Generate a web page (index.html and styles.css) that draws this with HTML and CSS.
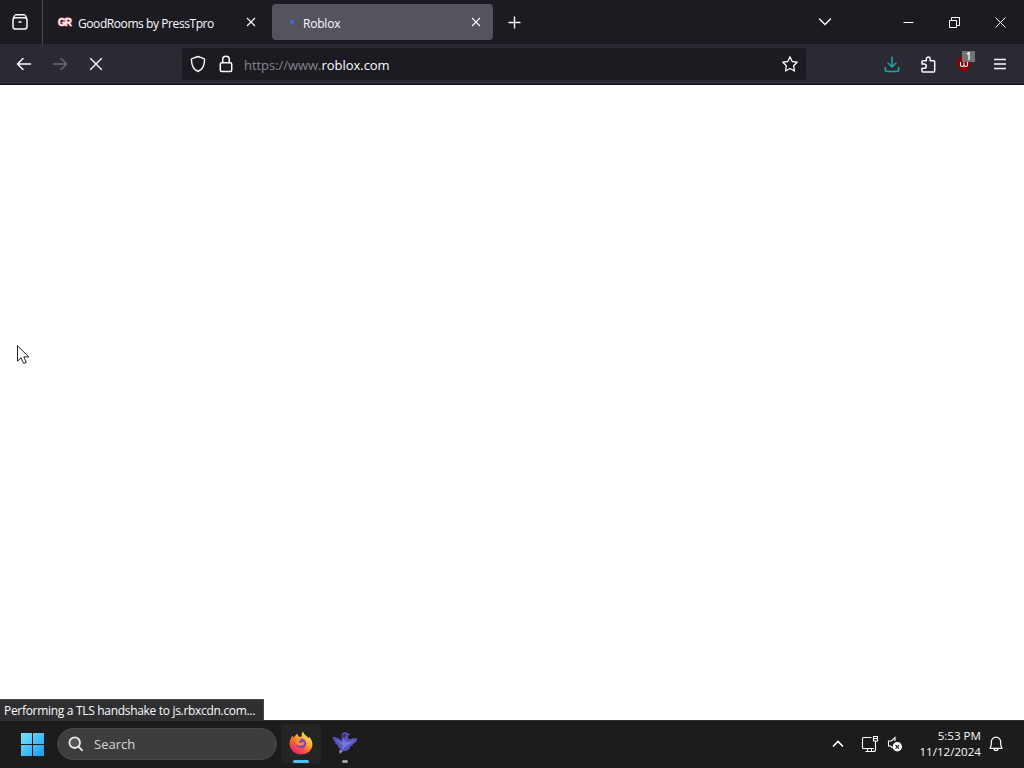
FILE: index.html
```html
<!DOCTYPE html>
<html lang="en">

<head>
    <meta charset="UTF-8">
    <title>Roblox</title>
    <link rel="stylesheet" href="styles.css">
</head>

<body>
    <!-- Tab bar -->
    <div class="tabbar">
        <div class="firefox-view">
            <svg width="18" height="18" viewBox="0 0 18 18" fill="none" stroke="#fbfbfe" stroke-width="1.5" stroke-linecap="round">
                <path d="M4.5 1.8h9" />
                <path d="M2 7.2a2.4 2.4 0 0 1 2.4-2.4h9.2A2.4 2.4 0 0 1 16 7.2v6.6a2.2 2.2 0 0 1-2.2 2.2H4.2A2.2 2.2 0 0 1 2 13.8zM2.3 5.5l1.2-2.6M15.7 5.5l-1.2-2.6M8 9h2" />
            </svg>
        </div>
        <div class="tab">
            <span class="gr-icon">GR</span>
            <span class="tab-title good">GoodRooms by PressTpro</span>
            <svg class="tab-close" width="10" height="10" viewBox="0 0 10 10" stroke="#fbfbfe" stroke-width="1.1"><path d="M1 1l8 8M9 1L1 9" /></svg>
        </div>
        <div class="tab active">
            <span class="loading"></span>
            <span class="tab-title">Roblox</span>
            <svg class="tab-close" width="10" height="10" viewBox="0 0 10 10" stroke="#fbfbfe" stroke-width="1.1"><path d="M1 1l8 8M9 1L1 9" /></svg>
        </div>
        <svg class="new-tab" width="13" height="13" viewBox="0 0 13 13" stroke="#fbfbfe" stroke-width="1.4"><path d="M6.5 0.5v12M0.5 6.5h12" /></svg>

        <div class="window-buttons">
            <svg width="14" height="10" viewBox="0 0 14 10" fill="none" stroke="#fbfbfe" stroke-width="1.4" stroke-linecap="round"><path d="M1.5 2L7 7.5 12.5 2" /></svg>
            <svg class="min" width="11" height="11" viewBox="0 0 11 11" stroke="#fff"><path d="M0.5 5.5h10" /></svg>
            <svg class="max" width="11" height="11" viewBox="0 0 11 11" fill="none" stroke="#fff"><path d="M0.5 3.5h7v7h-7zM2.5 3.5v-3h8v8h-3" /></svg>
            <svg class="close" width="11" height="11" viewBox="0 0 11 11" stroke="#fff"><path d="M0.5 0.5l10 10M10.5 0.5l-10 10" /></svg>
        </div>
    </div>

    <!-- Navigation bar -->
    <div class="navbar">
        <svg class="back" width="16" height="16" viewBox="0 0 16 16" fill="none" stroke="#fbfbfe" stroke-width="1.5" stroke-linecap="round" stroke-linejoin="round"><path d="M14.5 8H1.5M7 2.5L1.5 8 7 13.5" /></svg>
        <svg class="forward" width="16" height="16" viewBox="0 0 16 16" fill="none" stroke="#6b6a72" stroke-width="1.4" stroke-linecap="round" stroke-linejoin="round"><path d="M1.5 8h13M9 2.5L14.5 8 9 13.5" /></svg>
        <svg class="stop" width="16" height="16" viewBox="0 0 16 16" stroke="#fbfbfe" stroke-width="1.4" stroke-linecap="round"><path d="M2.5 2.5l11 11M13.5 2.5l-11 11" /></svg>

        <div class="urlbar">
            <svg width="16" height="18" viewBox="0 0 16 18" fill="none" stroke="#fbfbfe" stroke-width="1.4" stroke-linejoin="round"><path d="M8 1.5l6 2.2c.4.1.6.4.6.8-.1 5.5-1.9 10-6.600 12-4.700-2-6.500-6.500-6.600-12 0-.4.2-.7.6-.8z" /></svg>
            <svg class="lock" width="14" height="18" viewBox="0 0 14 18" fill="none" stroke="#fbfbfe" stroke-width="1.5"><rect x="1.3" y="7.8" width="11.4" height="8.7" rx="1.5" /><path d="M3.7 7.8V4.600a3.300 3.300 0 0 1 6.600 0v3.200" /></svg>
            <span class="url">https://www.<b>roblox.com</b></span>
            <svg class="star" width="18" height="18" viewBox="0 0 18 18" fill="none" stroke="#fbfbfe" stroke-width="1.3" stroke-linejoin="round"><path d="M9 1.800l2.200 4.700 5 .7-3.600 3.600.9 5.200L9 13.500 4.500 16l.9-5.200L1.800 7.200l5-.7z" /></svg>
        </div>

        <svg class="download" width="16" height="17" viewBox="0 0 16 17" fill="none" stroke="#1fa5a9" stroke-width="1.5" stroke-linecap="round" stroke-linejoin="round"><path d="M8 1v9.500M4 7l4 4 4-4M1.300 11.500v2a2 2 0 0 0 2 2h9.400a2 2 0 0 0 2-2v-2" /></svg>
        <svg class="puzzle" width="16" height="17" viewBox="0 0 16 17" fill="none" stroke="#fbfbfe" stroke-width="1.5" stroke-linejoin="round"><path d="M2 8V5.800a1 1 0 0 1 1-1h3.300V3a1.900 1.900 0 0 1 3.800 0v1.800h3.600a1 1 0 0 1 1 1V15a1 1 0 0 1-1 1H3a1 1 0 0 1-1-1v-2.700h2.100a2.100 2.100 0 0 0 0-4.300z" /></svg>
        <div class="addon">
            <svg width="16" height="16" viewBox="0 0 16 16"><path d="M8 0l6.500 2.500V7c0 4.500-2.500 7-6.500 9C4 14 1.500 11.500 1.500 7V2.500z" fill="#900009" /><path d="M4.500 6v3q0 1.500 1.700 1.500T8 9V6.500M8 9q0 1.500 1.700 1.500T11.500 9V6" fill="none" stroke="#fff" stroke-width="1.1" /></svg>
            <span class="badge">1</span>
        </div>
        <svg class="menu" width="14" height="12" viewBox="0 0 14 12" stroke="#fbfbfe" stroke-width="1.3" stroke-linecap="round"><path d="M1.5 1.5h11M1.5 6h11M1.5 10.5h11" /></svg>
    </div>

    <!-- Page is still blank while loading -->
    <div class="page">
        <svg class="cursor" width="13" height="20" viewBox="0 0 13 20"><path d="M.5 .7v15.500l3.600-3.400 2.500 5.700 2.700-1.200-2.500-5.400h5z" fill="#fff" stroke="#222" stroke-width="1" /></svg>
        <div class="status"><span>Performing a TLS handshake to js.rbxcdn.com...</span></div>
    </div>

    <!-- Taskbar -->
    <div class="taskbar">
        <svg class="start" width="23" height="23" viewBox="0 0 23 23">
            <defs>
                <linearGradient id="win" x1="0" y1="0" x2="23" y2="23" gradientUnits="userSpaceOnUse">
                    <stop offset="0" stop-color="#7be3fc" />
                    <stop offset="1" stop-color="#159cf0" />
                </linearGradient>
            </defs>
            <path d="M0 0h11v11H0zM12 0h11v11H12zM0 12h11v11H0zM12 12h11v11H12z" fill="url(#win)" />
        </svg>
        <div class="search">
            <svg width="16" height="16" viewBox="0 0 16 16" fill="#555" stroke="#eee" stroke-width="1.8" stroke-linecap="round"><circle cx="6.7" cy="6.7" r="5.3" /><path d="M10.6 10.6l3.5 3.7" /></svg>
            <span>Search</span>
        </div>
        <div class="app running">
            <svg width="24" height="24" viewBox="0 0 24 24">
                <defs>
                    <linearGradient id="fox" x1="20" y1="2" x2="5" y2="23" gradientUnits="userSpaceOnUse">
                        <stop offset="0" stop-color="#fff44f" />
                        <stop offset=".35" stop-color="#ffb02e" />
                        <stop offset=".65" stop-color="#ff5a36" />
                        <stop offset="1" stop-color="#e31587" />
                    </linearGradient>
                </defs>
                <path d="M14 .5c.4 2 1.800 3.200 3.300 4.600 1.200.6 1.800 1.600 2 2.400l.8-1.700c2.500 2.700 3.600 5.700 3.300 8.200C22.800 19.700 18 23.500 12 23.500 5.600 23.500.6 18.800.6 12.800c0-3.500 1.200-6.100 3-8.300l.8 2.300 1.300-1.500c1-.8 2.300-2.100 2.800-2.800.2 1.500.5 2.500 1.500 3.500 1-.5 2-.7 2.900-.6C12.300 3.800 12.800 2 14 .5z" fill="url(#fox)" />
                <circle cx="12.200" cy="12.500" r="5" fill="#8141c8" />
                <path d="M4.400 7c2-.9 4-.4 5.200.8l2.900.2c-.2 1.300-2 1.600-2.400 2.300-.2 1.200 1.300 2.200 3 1.300 1-.5 2-.3 2.500.3-1 2.600-4.500 3.700-7.300 1.900C6 12.400 6 9.600 7 8z" fill="#ff8b2e" />
            </svg>
            <i class="indicator"></i>
        </div>
        <div class="app bird">
            <svg width="26" height="24" viewBox="0 0 26 24">
                <path d="M9.500 5c0-3 3.500-4.800 5.800-2.800l3.200 1-2.600 1.600.5 3.700c2.300-.7 5.700-1.600 9-1-.8 3.200-2.800 5-5 5.900l.8 1.100-2.800.5c-.4 3.600-3.500 5.200-6.800 5L8 23l1.200-4.500C6.500 17.200 5.800 15.200 5.500 13.500L2.800 13 4 11.700C2.100 10.200 1 8.200.6 5.700c3.500.3 6.500 1.500 9.200 4z" fill="#5a55bf" />
                <path d="M10.500 6.500l3.500 5 8-1.500-6.500 4-5.600 5 .9-5L4 8.600l7 3.200z" fill="#7b77da" />
                <path d="M10.500 4.500c1-2 3-2.300 4.300-1l-2.300 3.800-2-1z" fill="#343079" />
                <path d="M7.700 18.500l2 1.500L7.600 23z" fill="#b8bfe9" />
            </svg>
            <i class="indicator"></i>
        </div>

        <div class="tray">
            <svg class="up" width="12" height="8" viewBox="0 0 12 8" fill="none" stroke="#fff" stroke-width="1.6"><path d="M1 6.5l5-5 5 5" /></svg>
            <svg class="network" width="18" height="18" viewBox="0 0 18 18" fill="none" stroke="#fff" stroke-width="1.1"><path d="M10.5 2.5h-8a1 1 0 0 0-1 1v9a1 1 0 0 0 1 1h10.500M6.500 13.500v3M10.500 13.500v3M4.500 16.500h8M12.500 1.500h4v4.500h-4zM14.500 6v8.500a2 2 0 0 1-2 2M13 3.500h3" /></svg>
            <svg class="volume" width="16" height="16" viewBox="0 0 16 16"><path d="M8 5V1.500L4.500 5H1.500v5h2l2 2" fill="none" stroke="#fff" stroke-width="1.1" /><circle cx="10.3" cy="10.8" r="4.700" fill="#fff" /><path d="M8.500 9l3.600 3.600M12.100 9l-3.600 3.600" stroke="#222" stroke-width="1.1" /></svg>
            <div class="clock">
                <span class="time">5:53 PM</span>
                <span class="date">11/12/2024</span>
            </div>
            <svg class="bell" width="14" height="16" viewBox="0 0 14 16" fill="none" stroke="#fff" stroke-width="1.2" stroke-linejoin="round"><path d="M7 1.200a4.700 4.700 0 0 0-4.700 4.700v3L1 12.300h12l-1.300-3.400v-3A4.700 4.700 0 0 0 7 1.200zM5 12.500a2 2 0 0 0 4 0" /></svg>
        </div>
    </div>
</body>

</html>
```
FILE: styles.css
```css
* {
    box-sizing: border-box;
}

body {
    margin: 0;
    height: 768px;
    display: flex;
    flex-direction: column;
    overflow: hidden;
    font-family: "Open Sans", "Noto Sans", sans-serif;
    font-size: 12px;
    color: #fbfbfe;
    background-color: #fff;
}

svg {
    display: block;
    flex-shrink: 0;
}

span {
    white-space: nowrap;
}

/* Tab bar */
.tabbar {
    height: 44px;
    display: flex;
    align-items: center;
    background-color: #1c1b22;
}

.firefox-view {
    width: 43px;
    height: 44px;
    padding: 13px 0 0 11px;
    border-right: 1px solid #4a4953;
}

.tab {
    width: 221px;
    height: 36px;
    margin-left: 4px;
    padding: 0 12px 0 11px;
    display: flex;
    align-items: center;
    border-radius: 4px;
}

.tab.active {
    background-color: #54535e;
    padding-left: 18px;
}

.gr-icon {
    width: 20px;
    font-family: "Liberation Sans", sans-serif;
    font-size: 10px;
    font-weight: bold;
    letter-spacing: -1px;
    color: #fff;
    -webkit-text-stroke: 0.3px #ffd5dc;
    text-shadow: 0 0 2px #e3344f, 0 0 1px #e3344f;
}

.loading {
    width: 4px;
    height: 4px;
    margin-right: 9px;
    border-radius: 50%;
    background-color: #3f6ddb;
}

.tab-title {
    padding-top: 2px;
    letter-spacing: -0.2px;
}

.tab-title.good {
    letter-spacing: -0.42px;
}

.tab-close {
    margin-left: auto;
}

.new-tab {
    margin-left: 15px;
}

.window-buttons {
    margin-left: auto;
    padding-right: 18px;
    display: flex;
    align-items: center;
}

.min {
    margin-left: 71px;
}

.max {
    margin-left: 35px;
}

.close {
    margin-left: 35px;
}

/* Navigation bar */
.navbar {
    height: 41px;
    padding: 0 17px 0 16px;
    display: flex;
    align-items: center;
    background-color: #2b2a33;
    border-bottom: 1px solid #0c0c0d;
}

.forward,
.stop {
    margin-left: 20px;
}

.urlbar {
    width: 624px;
    height: 32px;
    margin-left: 78px;
    padding: 0 7px 0 8px;
    display: flex;
    align-items: center;
    border-radius: 2px;
    background-color: #1c1b22;
}

.lock {
    margin-left: 13px;
}

.url {
    margin-left: 11px;
    padding-top: 1px;
    font-size: 13px;
    letter-spacing: -0.04px;
    color: #85858c;
}

.url b {
    font-weight: normal;
    color: #fbfbfe;
}

.star {
    margin-left: auto;
}

.download {
    margin-left: 78px;
}

.puzzle {
    margin-left: 20px;
}

.addon {
    position: relative;
    margin-left: 20px;
}

.badge {
    position: absolute;
    top: -5px;
    left: 6px;
    width: 13px;
    height: 11px;
    font-size: 10px;
    font-weight: 600;
    line-height: 11px;
    text-align: center;
    background-color: #737373;
}

.menu {
    margin-left: auto;
}

/* Page */
.page {
    position: relative;
    flex: 1;
    display: flex;
    align-items: flex-end;
}

.cursor {
    position: absolute;
    left: 17px;
    top: 260px;
}

.status {
    width: 264px;
    height: 21px;
    padding-left: 4px;
    line-height: 22px;
    letter-spacing: -0.31px;
    background-color: #2f2f31;
    border-top: 1px solid #47474b;
    border-right: 1px solid #47474b;
}

/* Taskbar */
.taskbar {
    height: 48px;
    padding-left: 21px;
    display: flex;
    align-items: center;
    background-color: #1c1c1c;
    box-shadow: inset 0 1px #303030;
}

.search {
    width: 220px;
    height: 32px;
    margin-left: 13px;
    padding-left: 10px;
    display: flex;
    align-items: center;
    font-size: 13px;
    color: #d8d8d8;
    background-color: #3d3d3d;
    border: 1px solid #484848;
    border-radius: 16px;
}

.search span {
    margin-left: 10px;
}

.app {
    width: 40px;
    height: 40px;
    margin-left: 4px;
    padding-top: 7px;
    display: flex;
    flex-direction: column;
    align-items: center;
    justify-content: space-between;
    border-radius: 4px;
}

.app.running {
    background-color: #242424;
}

.indicator {
    width: 6px;
    height: 3px;
    margin-bottom: 1px;
    border-radius: 2px;
    background-color: #a0a0a0;
}

.running .indicator {
    width: 16px;
    background-color: #4cc2f1;
}

.tray {
    margin-left: auto;
    padding-right: 21px;
    display: flex;
    align-items: center;
}

.network {
    margin-left: 17px;
}

.volume {
    margin-left: 8px;
}

.clock {
    width: 78px;
    display: flex;
    flex-direction: column;
    align-items: flex-end;
    font-size: 11.6px;
    line-height: 16px;
}

.bell {
    margin-left: 8px;
}
```
